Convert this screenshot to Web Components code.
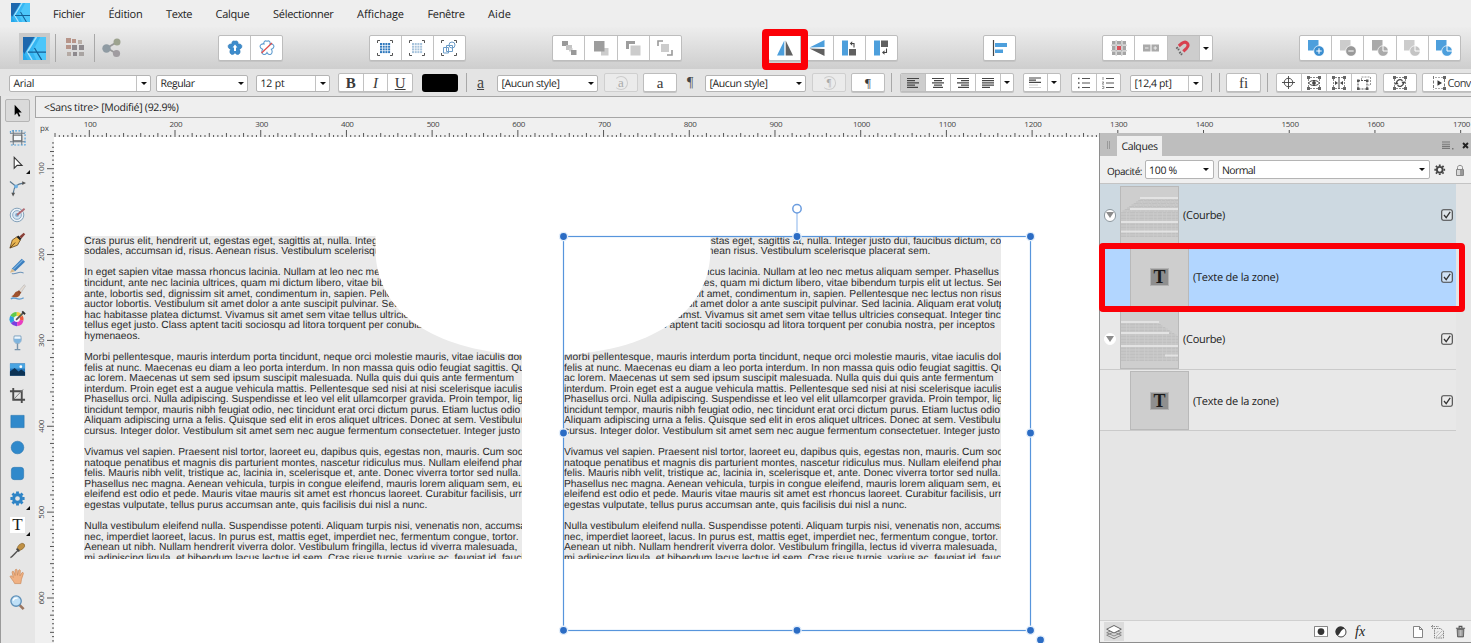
<!DOCTYPE html>
<html lang="fr">
<head>
<meta charset="utf-8">
<title>Sans titre</title>
<style>
  body {
    margin: 0;
    width: 1471px;
    height: 643px;
    overflow: hidden;
    font-family: "Open Sans", "Noto Sans", sans-serif;
    font-size: 10.5px;
    color: #1c1c1c;
    background: #e6e6e6;
  }
</style>
</head>
<body>
<affinity-app></affinity-app>

<script>
// ---------- icons ----------
const LOGO = `<path d="M0 0H24V24H0z" fill="#35b6f2"/><path d="M0 0H12L0 20z" fill="#1d67ad"/><path d="M24 0V24H14L10 15 18 0z" fill="#4cc6fa"/>
  <path d="M14 0L4.500 15.500 9.500 24" fill="none" stroke="#a5e2ff" stroke-width="1.500"/><path d="M5 15.800H24M12 11.500L19.500 24" stroke="#145f96" stroke-width="1.300" fill="none"/><path d="M0 15V24H5z" fill="#27a7ea"/>`;
const BRACKETS = `<path d="M.5 3V.5H3M13 .5H15.500V3M15.500 13V15.500H13M3 15.500H.5V13" fill="none" stroke="#555" stroke-width="1"/>`;
const GRIDDOTS = (c) => {
  let s = '';
  for (let y = 0; y < 4; y++) for (let x = 0; x < 4; x++) s += `<rect x="${3 + x * 2.7}" y="${3 + y * 2.7}" width="2" height="2" fill="${c}"/>`;
  return s;
};
const NODES = `<g fill="#666"><path d="M0 0h3v3H0zM11 0h3v3h-3zM0 11h3v3H0zM11 11h3v3h-3z"/></g><path d="M1.500 3V11M12.500 3V11M3 1.500H11M3 12.500H11" stroke="#888" stroke-width="1" stroke-dasharray="2 1"/>`;
const FLOWER = 'M8 1.200C10 .200 11.600 1.700 11 4 13.500 3.600 15.300 5 14.800 6.900 14.500 8.300 13.400 8.900 12.300 9.300 13.500 11 13.500 13.200 11.800 14.200 10.300 15 8.800 14.300 8 12.600 7.200 14.300 5.700 15 4.200 14.200 2.500 13.200 2.500 11 3.700 9.300 2.600 8.900 1.500 8.300 1.200 6.900.700 5 2.500 3.600 5 4 4.400 1.700 6 .200 8 1.200z';
const PARA = (rows) => rows.map(([a, b], i) => `<path d="M${a} ${1.5 + i * 2.2}H${b}" stroke="#444" stroke-width="1.200"/>`).join('');
const BOOL = (a, b, extra) => `<rect x="0" y="0" width="10.500" height="10.500" fill="${a}"/><circle cx="11" cy="11" r="5.300" fill="${b}" stroke="#fff" stroke-width=".7"/>${extra}`;

const ICONS = {
  logo: ['0 0 24 24', LOGO],
  pixels: ['0 0 20 20', `<g fill="#b7958a"><path d="M1 0h5v5H1zM7 1h4v4H7zM1 7h5v4H1z"/></g><g fill="#9c9c9c"><path d="M7 7h5v5H7zM14 7h5v5h-5zM8 14h4v4H8z" fill="#8e8a8e"/><path d="M13 2h4v4h-4z" fill="#bbb0a8"/><path d="M2 14h4v4H2z" fill="#b5aaa4"/><path d="M14 14h5v4h-5z" fill="#a9a4a2"/></g>`],
  share: ['0 0 20 20', `<path d="M5 10L15 4M5 10L15 16" stroke="#999" stroke-width="1.800"/><circle cx="4.500" cy="10.500" r="4.200" fill="#8f9ba3"/><circle cx="15" cy="4" r="3.500" fill="#9da38f"/><circle cx="14.500" cy="15.500" r="3.600" fill="#a09ca0"/>`],
  flower: ['0 0 16 16', `<path d="${FLOWER}" fill="#3d8ccc" stroke="#2f78b6" stroke-width=".6"/><path d="M8 4.500L10.400 7.500H9V11H7V7.500H5.600z" fill="#fff"/>`],
  flowerOff: ['0 0 16 16', `<path d="${FLOWER}" fill="#fff" stroke="#5f9ccf" stroke-width="1.100"/><path d="M2.500 13L13 3" stroke="#e04a4a" stroke-width="1.200"/>`],
  gridFull: ['0 0 16 16', BRACKETS + GRIDDOTS('#2f78bd')],
  gridSoft: ['0 0 16 16', BRACKETS + GRIDDOTS('#a8c4dc')],
  gridShape: ['0 0 16 16', BRACKETS + `<path d="M2.500 7.500H7.500V13H2.500zM5.500 5.500H11.500V11.500H5.500z" fill="none" stroke="#6b9cc8"/><circle cx="11" cy="5" r="3" fill="none" stroke="#6b9cc8"/>`],
  order1: ['0 0 16 16', `<path d="M1 1h6v5H1z" fill="#999"/><path d="M5 5h6v5H5z" fill="#c4c4c4"/><path d="M8 8h3.500v3.500H8z" fill="#ccc"/><path d="M10 10h5.500v5H10z" fill="#999"/>`],
  order2: ['0 0 16 16', `<path d="M8 8h7.500v7.500H8z" fill="#ccc"/><path d="M1 1h10.500v10.500H1z" fill="#9d9d9d"/>`],
  order3: ['0 0 16 16', `<path d="M1 1h9v3H4v5H1z" fill="#9d9d9d"/><path d="M5.500 5.500h10v10h-10z" fill="#ccc"/>`],
  order4: ['0 0 16 16', `<path d="M4 4h8v8H4z" fill="#ccc"/><path d="M1 6V1H6M10 15H15V10" fill="none" stroke="#999" stroke-width="1.600"/>`],
  flipH: ['0 0 16 16', `<path d="M7.300 .5V15.500H0z" fill="#4d9fdc"/><path d="M8.700 .5V15.500H16z" fill="#606060"/>`],
  flipV: ['0 0 16 16', `<path d="M.5 7.500L15.500 0V7z" fill="#4d9fdc"/><path d="M.5 8.500L15.500 16V9z" fill="#606060"/>`],
  rotL: ['0 0 16 16', `<path d="M1 .5h6v15H1z" fill="#4d9fdc"/><path d="M8 9h7v6.500H8z" fill="#606060"/><path d="M10.500 3.500H13V7.500" fill="none" stroke="#444" stroke-width="1.100"/><path d="M11.200 1.300L8.800 3.500 11.200 5.700z" fill="#444"/>`],
  rotR: ['0 0 16 16', `<path d="M1 .5h6v15H1z" fill="#4d9fdc"/><path d="M8 .5h7v6.500H8z" fill="#606060"/><path d="M11 12.500H13.500V8.500" fill="none" stroke="#444" stroke-width="1.100"/><path d="M11.500 10.300L9 12.500 11.500 14.700z" fill="#444"/>`],
  alignObj: ['0 0 16 16', `<path d="M1.500 0V16" stroke="#444" stroke-width="1.200"/><path d="M3 3h12v4H3z" fill="#4d9fdc"/><path d="M3 9.500h8v3.500H3z" fill="#4d9fdc"/>`],
  snapGrid: ['0 0 16 16', `<g fill="#a5a5a5"><path d="M1 1h3.500v3.500H1zM6 1h4v3.500H6zM11.500 1H15v3.500h-3.500zM1 6h3.500v4H1zM11.500 6H15v4h-3.500zM1 11.500h3.500V15H1zM6 11.500h4V15H6zM11.500 11.500H15V15h-3.500z"/></g><path d="M5.200 0V16M10.700 0V16M0 5.200H16M0 10.700H16" stroke="#888" stroke-width=".5"/><path d="M6 6h4v4H6z" fill="#d9505a"/>`],
  snapPix: ['0 0 16 16', `<path d="M0 4.500h7.500v7H0zM8.500 4.500H16v7H8.500z" fill="#aaa"/><path d="M2 8H5.500M10.500 8H14M12.200 6.200V9.800" stroke="#eee" stroke-width="1"/>`],
  magnet: ['0 0 16 16', `<path d="M3.800 6L7 3.300C11.500 0 15 4.800 11.500 8.300L8.300 11.300" fill="none" stroke="#d8414f" stroke-width="3"/><path d="M1.500 7.300L4 10M4.500 12L7 14.700" stroke="#666" stroke-width="2.200" stroke-dasharray="1.600 .8"/>`],
  boolAdd: ['0 0 16 16', BOOL('#4d9fdc', '#3b8ed0', '<path d="M11 8.300V13.700M8.300 11H13.700" stroke="#fff" stroke-width="1.100"/>')],
  boolSub: ['0 0 16 16', BOOL('#ccc', '#999', '<path d="M8.300 11H13.700" stroke="#fff" stroke-width="1"/>')],
  boolInt: ['0 0 16 16', BOOL('#aaa', '#aaa', '<path d="M11 5.700V11H16" fill="none" stroke="#fff"/>')],
  boolXor: ['0 0 16 16', BOOL('#ccc', '#c4c4c4', '<path d="M11 5.700V11H16" fill="none" stroke="#fff"/>')],
  boolDiv: ['0 0 16 16', BOOL('#4d9fdc', '#4d9fdc', '<path d="M11 5.700V11H16" fill="none" stroke="#fff"/>')],
  left: ['0 0 12 12', PARA([[0, 12], [0, 8], [0, 12], [0, 8], [0, 11]])],
  center: ['0 0 12 12', PARA([[0, 12], [2, 10], [0, 12], [2, 10], [1, 11]])],
  right: ['0 0 12 12', PARA([[0, 12], [4, 12], [0, 12], [4, 12], [1, 12]])],
  justify: ['0 0 12 12', PARA([[0, 12], [0, 12], [0, 12], [0, 12], [0, 8]])],
  vtop: ['0 0 12 12', `<path d="M0 1H12M0 3.200H7M0 5.400H12" stroke="#444" stroke-width="1.200"/><path d="M0 8H9M0 10.500H12" stroke="#ccc" stroke-width="1"/>`],
  bullets: ['0 0 12 12', `<path d="M4 1.500H12M4 6H12M4 10.500H12" stroke="#555" stroke-width="1.100"/><path d="M0 1.500H1.500M0 6H1.500M0 10.500H1.500" stroke="#555" stroke-width="1.500"/>`],
  numbers: ['0 0 12 12', `<path d="M4 1.500H12M4 6H12M4 10.500H12" stroke="#555" stroke-width="1.100"/><path d="M1 0V3M0 5H1.800L.3 7.200H2M0 9.300H1.800V11.600H0" stroke="#777" stroke-width=".8" fill="none"/>`],
  target: ['0 0 14 14', `<circle cx="7" cy="7" r="4.600" fill="none" stroke="#444"/><path d="M7 0V14M0 7H14" stroke="#444"/>`],
  eyeBox: ['0 0 14 14', NODES + `<path d="M1.500 7C4 3.600 10 3.600 12.500 7 10 10.400 4 10.400 1.500 7z" fill="#fff" stroke="#444"/><circle cx="7" cy="7" r="1.900" fill="#444"/>`],
  flipBox: ['0 0 14 14', NODES + `<path d="M7 1V13" stroke="#444"/><path d="M3 5L6 7 3 9zM11 5L8 7 11 9z" fill="#444"/>`],
  copyBox: ['0 0 14 14', `<path d="M4.500 4V1H13.500V9H11" fill="none" stroke="#999" stroke-dasharray="2 1"/><path d="M1 4.500H10V13H1z" fill="none" stroke="#555" stroke-width="1.100" stroke-dasharray="2 1"/><path d="M0 3.500h2.500V6H0zM9 3.500h2.500V6H9zM0 11.500h2.500V14H0zM9 11.500h2.500V14H9z" fill="#555"/>`],
  cycleBox: ['0 0 14 14', NODES + `<path d="M3.500 7A3.500 3.500 0 0 1 9.500 4.700M10.500 7A3.500 3.500 0 0 1 4.500 9.300" fill="none" stroke="#444" stroke-width="1.300"/><path d="M12.700 5.500L10.500 8.500 8.300 5.800zM1.300 8.500L3.500 5.500 5.700 8.200z" fill="#444"/>`],
  convert: ['0 0 14 14', `<path d="M1.500 0V14M12.500 3V11" stroke="#777" stroke-dasharray="3 1.500"/><path d="M3 1.500H11M3 12.500H11" stroke="#aaa" stroke-dasharray="2 1"/><path d="M11 0h3v3h-3zM11 11h3v3h-3z" fill="#666"/><path d="M5.500 4.200L10 7 5.500 9.800z" fill="#333"/>`],
  move: ['0 0 18 18', `<path d="M6 3V14L8.500 11.600 10.400 15.500 12 14.700 10.100 11H13.500z" fill="#000"/>`],
  artboard: ['0 0 18 18', `<path d="M4.500 1V17M13.500 1V17M1 4.500H17M1 13.500H17" stroke="#6f7b86" stroke-width="1.100"/><path d="M4.500 6.500H13.500V12.500H4.500z" fill="#f4f8fb" stroke="#555"/><path d="M1.500 4V1.500M2 17H17V3M3 2H14" fill="none" stroke="#4d9fdc" stroke-width="1.200" stroke-dasharray="2 1.500"/>`],
  node: ['0 0 18 18', `<path d="M5.500 2.500V14L8.600 11H13.800z" fill="#fff" stroke="#333" stroke-width="1.100"/>`],
  corner: ['0 0 18 18', `<path d="M1 1.500L7 6.500C5 9 5 11 4.500 14M7 6.500C10 4 12 3.500 15 3.200" fill="none" stroke="#5a7890" stroke-width="1.300"/><path d="M14 1.200L18 3.200 14 5.200zM2.500 13.500L6.500 13.500 4.300 17.500z" fill="#555"/><circle cx="7.500" cy="6.800" r="2" fill="#6fb1e4"/>`],
  contour: ['0 0 18 18', `<circle cx="8.500" cy="9.500" r="7.200" fill="#e9f0f6" stroke="#7d9cb6"/><circle cx="8.500" cy="9.500" r="4.600" fill="#d7e6f2" stroke="#86a6c2"/><circle cx="8.500" cy="9.500" r="2" fill="#7fa9cc"/><path d="M8.500 9.500L16.500 3" stroke="#b06a72" stroke-width="2"/>`],
  pen: ['0 0 18 18', `<path d="M1 17L3.500 8.500 8.500 5 12 8.500 9 14z" fill="#e9b551" stroke="#6a4a20" stroke-width=".9"/><path d="M1 17L6.500 11.200" stroke="#5a3c14"/><path d="M9 4.500L12.500 8" stroke="#222" stroke-width="2.400"/><path d="M11 4.800L15.500 .8 17.200 2.500 13.200 6.800z" fill="#8a4038"/>`],
  pencil: ['0 0 18 18', `<path d="M3 11.500L13.500 .8 17 4 6.500 14z" fill="#3c7fbf"/><path d="M4.500 12L14.500 2.300" stroke="#7db4e2" stroke-width="1.200"/><path d="M1 15.500L3 11.500 6.500 14z" fill="#d9b98a"/><path d="M3 16.500C8 18 10 13 15.500 16" stroke="#6c93b8" stroke-width="1.100" fill="none"/>`],
  brush: ['0 0 18 18', `<path d="M10 8L16 .8 17.500 2 12.500 9.500z" fill="#e4dcd4" stroke="#aaa" stroke-width=".5"/><path d="M8 8.500L10.500 6.500 13 9 11 12z" fill="#8f4a2c"/><path d="M8.500 8C5.500 8.500 6 12 2.500 13 6 15 11.500 14 11.500 11z" fill="#a0522d"/><path d="M2 16C6 12 9 19 15.500 14.500" fill="none" stroke="#5d9bd0" stroke-width="1.400"/>`],
  picker: ['0 0 18 18', `<path d="M8 9.500L8 2A7.500 7.500 0 0 1 14.500 6z" fill="#f6cf3c"/><path d="M8 9.500L8 2A7.500 7.500 0 0 0 1.500 6z" fill="#5fc94a"/><path d="M8 9.500L1.500 6A7.500 7.500 0 0 0 2 14z" fill="#2b9fe0"/><path d="M8 9.500L2 14A7.500 7.500 0 0 0 9 17z" fill="#7a3fe0"/><path d="M8 9.500L9 17A7.500 7.500 0 0 0 15.300 11z" fill="#e83dc0"/><path d="M8 9.500L15.300 11A7 7 0 0 0 14.500 6z" fill="#ef5a3c"/><circle cx="8.300" cy="9.500" r="3.200" fill="#f4f4f4"/><path d="M7.500 10.500L15 3" stroke="#555" stroke-width="1.800"/><path d="M14 1.500L17 4.500" stroke="#333" stroke-width="2"/>`],
  glass: ['0 0 18 18', `<path d="M5.500 1H12.500C13.500 6 12.500 9 9 9 5.500 9 4.500 6 5.500 1z" fill="#edf6fc" stroke="#7ba0be"/><path d="M5.300 4H12.700C13 7.500 11.500 8.600 9 8.600 6.500 8.600 5 7.500 5.300 4z" fill="#7fb4dd"/><path d="M9 9V15M6 15.500H12" stroke="#7893aa" stroke-width="1.500"/>`],
  image: ['0 0 18 18', `<path d="M1 2.500H17V15.500H1z" fill="#2776b8"/><path d="M1 3H17V8H1z" fill="#4aa5e2"/><path d="M1 11L6 7.500 10 11 13 9 17 12V15.500H1z" fill="#0c3254"/><circle cx="12.500" cy="6" r="1.500" fill="#fff"/>`],
  crop: ['0 0 18 18', `<path d="M4.500 1V13.500H17M1 4.500H13.500V17" fill="none" stroke="#4c4c4c" stroke-width="2"/><path d="M5 13L15 2.500" stroke="#777" stroke-width="1"/>`],
  rect: ['0 0 18 18', `<path d="M2 2.500H16V15.500H2z" fill="#3089cb" stroke="#2573b0" stroke-width=".6"/>`],
  ellipse: ['0 0 18 18', `<circle cx="9" cy="9" r="6.700" fill="#3089cb" stroke="#2573b0" stroke-width=".6"/>`],
  rrect: ['0 0 18 18', `<rect x="2.500" y="2.500" width="13" height="13" rx="3" fill="#3089cb" stroke="#2573b0" stroke-width=".6"/>`],
  cog: ['0 0 18 18', `<circle cx="9" cy="9" r="4.100" fill="none" stroke="#2e84c6" stroke-width="3.200"/><g stroke="#2e84c6" stroke-width="3"><path d="M9 1.500V4M9 14V16.500M1.500 9H4M14 9H16.500M3.700 3.700L5.500 5.500M12.500 12.500L14.300 14.300M3.700 14.300L5.500 12.500M12.500 5.500L14.300 3.700"/></g>`],
  dropper: ['0 0 18 18', `<path d="M1.500 16.500C4 15.500 6 12 10 8.500" fill="none" stroke="#555" stroke-width="1.600"/><ellipse cx="12.800" cy="5" rx="4.300" ry="2.900" transform="rotate(-42 12.800 5)" fill="#c09145" stroke="#80602c" stroke-width=".6"/><path d="M8 7L11 10" stroke="#444" stroke-width="1.800"/>`],
  hand: ['0 0 18 18', `<path d="M6 16.500C5 14 2 11 1.200 9 1.500 7.800 3 8.200 4.500 10L3.200 4.300C3.500 3 4.900 3.200 5.200 4.300L6.500 8 6.500 2.300C6.900 1 8.300 1 8.600 2.300L9 7.700 10.200 2.500C10.800 1.400 12 1.800 12 3L11.600 8.300 13.700 5C14.600 4.300 15.500 5 15.200 6L13.200 12 12.500 16.500z" fill="#f0b183" stroke="#c98555" stroke-width=".7"/>`],
  zoom: ['0 0 18 18', `<path d="M10.500 11L15.500 16" stroke="#9c7660" stroke-width="2.800"/><circle cx="7.500" cy="7.500" r="5.500" fill="#bfe0f7" stroke="#5d8fb8" stroke-width="1.400"/><path d="M4.500 7C5 4.800 7 4 9 4.500" stroke="#fff" stroke-width="1.500" fill="none"/>`],
  gear: ['0 0 12 12', `<circle cx="6" cy="6" r="3" fill="none" stroke="#444" stroke-width="2"/><path d="M6 .4V2M6 10V11.600M.4 6H2M10 6H11.600M2 2L3.200 3.200M8.800 8.800L10 10M2 10L3.200 8.800M8.800 3.200L10 2" stroke="#444" stroke-width="1.900"/>`],
  lock: ['0 0 12 12', `<path d="M3.500 5.500V3.500C3.500 .7 8.500 .7 8.500 3.500V5.500" fill="none" stroke="#888"/><path d="M2.500 5.500H9.500V11.500H2.500z" fill="#d8d8d8" stroke="#888"/><path d="M6 6H9V11H6z" fill="#999"/>`],
  menu: ['0 0 12 12', `<path d="M0 3H8M0 5.200H8M0 7.400H8M0 9.400H8" stroke="#777" stroke-width="1.100"/><path d="M10 9H11.500V10.500H10z" fill="#777"/>`],
  close: ['0 0 8 8', `<path d="M1.200 1.200L6.800 6.800M6.800 1.200L1.200 6.800" stroke="#222" stroke-width="2.200"/>`],
  layers: ['0 0 16 16', `<path d="M8 5.500L15.300 8.700 8 12 .7 8.700zM8 8L15.300 11.200 8 14.800 .7 11.200z" fill="#d8d8d8" stroke="#777" stroke-width=".8"/><path d="M8 1.500L15.300 5.200 8 9 .7 5.200z" fill="#fff" stroke="#555" stroke-width=".9"/>`],
  mask: ['0 0 15 12', `<path d="M.5.500H14.500V11.500H.5z" fill="#fff" stroke="#777"/><circle cx="7.500" cy="6" r="3.600" fill="#333"/>`],
  adjust: ['0 0 12 12', `<circle cx="6" cy="6" r="5" fill="#fff" stroke="#444" stroke-width="1"/><path d="M9.500 2.500A5 5 0 1 0 2.500 9.500C5 9 5 4 9.500 2.500z" fill="#333"/>`],
  page: ['0 0 12 14', `<path d="M1.500 1.500H7.500L10.500 4.500V12.500H1.500zM7.500 1.500V4.500H10.500" fill="#fff" stroke="#777" stroke-width=".9"/>`],
  pageDup: ['0 0 14 14', `<path d="M3.500 3.500H9.500L12.500 6V13H3.500z" fill="#eee" stroke="#777" stroke-width=".9" stroke-dasharray="1.500 .8"/><path d="M0 1.500H8M1.500 0V5" stroke="#888" stroke-dasharray="1.500 1"/><path d="M5 12L11 6M5 8.500L7.500 6M8 12.500L12 9" stroke="#aaa" stroke-width=".8"/>`],
  trash: ['0 0 12 14', `<path d="M1 3.500H11M4.500 3V1.500H7.500V3" fill="none" stroke="#555" stroke-width="1.200"/><path d="M2.300 4.500H9.700L9.200 13H2.800z" fill="#888" stroke="#555" stroke-width=".9"/><path d="M4.500 5.500V12M6 5.500V12M7.500 5.500V12" stroke="#ddd" stroke-width=".7"/>`],
  check: ['0 0 12 12', `<rect x=".7" y=".7" width="10.600" height="10.600" rx="1.800" fill="#eee" fill-opacity=".5" stroke="#444" stroke-width="1.100"/><path d="M3 6L5.200 8.600 9.200 2.800" fill="none" stroke="#333" stroke-width="1.300"/>`],
};

// Small base: every element just fills its shadow root with styles + markup
class BaseElement extends HTMLElement {
  constructor() {
    super();
    this.attachShadow({ mode: 'open' });
  }
  connectedCallback() {
    this.shadowRoot.innerHTML = this.render();
    this.ready();
  }
  ready() {}
}

// <ui-icon name="flipH" size="16">
class UiIcon extends BaseElement {
  render() {
    const [box, body] = ICONS[this.getAttribute('name')];
    const [, , w, h] = box.split(' ').map(Number);
    const size = Number(this.getAttribute('size')) || w;
    return `
      <style>:host { display: block; flex: none; line-height: 0; }</style>
      <svg viewBox="${box}" width="${size}" height="${size * h / w}">${body}</svg>`;
  }
}

// A label that is tracked in or out until it is w pixels wide
class UiLabel extends BaseElement {
  render() {
    return `
      <style>
        :host { display: block; flex: none; white-space: nowrap; line-height: 14px; padding-top: 2px; text-rendering: geometricPrecision; }
        span { display: inline-block; }
      </style>
      <span><slot></slot></span>`;
  }
  ready() {
    const w = Number(this.getAttribute('w'));
    if (!w) return;
    const span = this.shadowRoot.querySelector('span');
    const natural = span.getBoundingClientRect().width;
    span.style.letterSpacing = (w - natural) / this.textContent.length + 'px';
    this.style.width = w + 'px';
  }
}

class MenuBar extends BaseElement {
  render() {
    const items = [['Fichier', 32], ['Édition', 34], ['Texte', 26], ['Calque', 34], ['Sélectionner', 60.500], ['Affichage', 47], ['Fenêtre', 37], ['Aide', 23]];
    return `
      <style>
        :host { display: flex; height: 27px; align-items: center; background: #eeeeee; font-size: 11px; }
        ui-icon { margin: -3px 23px 0 11px; }
        nav { display: flex; gap: 23.500px; padding-top: 1px; }
      </style>
      <ui-icon name="logo" size="19"></ui-icon>
      <nav>${items.map(([t, w]) => `<ui-label w="${w}">${t}</ui-label>`).join('')}</nav>`;
  }
}

// Row of joined buttons
class ToolGroup extends BaseElement {
  render() {
    return `
      <style>
        :host {
          display: flex;
          flex: none;
          box-sizing: border-box;
          height: var(--h, 26px);
          border: 1px solid #bdbdbd;
          border-radius: 2px;
          background: #fff;
          overflow: hidden;
          box-shadow: 0 1px 0 #c4c4c4;
        }
        :host([off]) { background: #ebebeb; border-color: #cfcfcf; color: #aaa; box-shadow: none; }
      </style>
      <slot></slot>`;
  }
}

class ToolCell extends BaseElement {
  render() {
    return `
      <style>
        :host {
          display: flex;
          flex: 1 1 0;
          align-items: center;
          justify-content: center;
          border-left: 1px solid #c2c2c2;
          font: 15px/16px "Liberation Serif", serif;
        }
        :host(:first-child) { border-left: 0; }
        :host([on]) { background: #cdcdcd; }
        :host([drop]) { flex: 0 0 12px; }
        i { border: 3px solid transparent; border-top: 3.500px solid #111; border-bottom: 0; }
      </style>
      ${this.hasAttribute('drop') ? '<i></i>' : '<slot></slot>'}`;
  }
}

class ToolSep extends BaseElement {
  render() {
    return `<style>:host { display: block; flex: none; width: 1px; height: 19px; background: #a8a8a8; }</style>`;
  }
}

// Drop-down field; "split" draws the rule before the arrow
class ComboBox extends BaseElement {
  render() {
    return `
      <style>
        :host {
          display: flex;
          flex: none;
          box-sizing: border-box;
          height: 17px;
          align-items: stretch;
          border: 1px solid #b4b4b4;
          border-radius: 2px;
          background: #fff;
        }
        .text { flex: 1; display: flex; align-items: center; padding-left: 3.500px; }
        .arrow { display: flex; align-items: center; justify-content: center; width: 13px; }
        :host([split]) .arrow { border-left: 1px solid #c2c2c2; }
        i { border: 3px solid transparent; border-top: 3.500px solid #111; border-bottom: 0; }
      </style>
      <div class="text"><slot></slot></div>
      <div class="arrow"><i></i></div>`;
  }
}

class MainToolbar extends BaseElement {
  render() {
    const group = (left, width, icons) => `
      <tool-group style="margin-left:${left}px;width:${width}px">
        ${icons.map((n) => `<tool-cell><ui-icon name="${n}" size="16"></ui-icon></tool-cell>`).join('')}
      </tool-group>`;
    return `
      <style>
        :host {
          display: flex;
          height: 42px;
          align-items: center;
          background: linear-gradient(#ededed, #cecece);
        }
        .persona { display: flex; align-items: center; justify-content: center; width: 31px; height: 31px; margin-left: 19px; background: #c9c9c9; }
        tool-sep { height: 28px; }
      </style>
      <div class="persona"><ui-icon name="logo" size="23"></ui-icon></div>
      <tool-sep style="margin-left:5px"></tool-sep>
      <ui-icon name="pixels" size="20" style="margin-left:9px"></ui-icon>
      <tool-sep style="margin-left:9px"></tool-sep>
      <ui-icon name="share" size="20" style="margin-left:6.500px"></ui-icon>
      ${group(96.5, 65, ['flower', 'flowerOff'])}
      ${group(85.5, 97, ['gridFull', 'gridSoft', 'gridShape'])}
      ${group(86.5, 130, ['order1', 'order2', 'order3', 'order4'])}
      ${group(86, 130, ['flipH', 'flipV', 'rotL', 'rotR'])}
      ${group(85, 33, ['alignObj'])}
      <tool-group style="margin-left:86px;width:111px">
        <tool-cell><ui-icon name="snapGrid" size="16"></ui-icon></tool-cell>
        <tool-cell><ui-icon name="snapPix" size="16"></ui-icon></tool-cell>
        <tool-cell on><ui-icon name="magnet" size="16"></ui-icon></tool-cell>
        <tool-cell drop></tool-cell>
      </tool-group>
      ${group(86, 162, ['boolAdd', 'boolSub', 'boolInt', 'boolXor', 'boolDiv'])}`;
  }
}

class ContextBar extends BaseElement {
  render() {
    const ic = (n, size = 12) => `<ui-icon name="${n}" size="${size}"></ui-icon>`;
    return `
      <style>
        :host { display: flex; height: 27px; align-items: center; background: #e4e4e4; overflow: hidden; --h: 19px; }
        combo-box { margin-top: 1px; }
        .swatch { flex: none; width: 36px; height: 18px; border-radius: 3px; background: #000; margin-left: 9px; }
        .glyph { flex: none; font: 16px/16px "Liberation Serif", serif; color: #444; }
        tool-group:not([off]) { color: #3a3a3a; }
        .ring { border: 1px solid #ccc; border-left-color: transparent; border-radius: 50%; line-height: 12px; }
      </style>
      <combo-box split style="margin-left:9px;width:142px"><ui-label w="20.500">Arial</ui-label></combo-box>
      <combo-box style="margin-left:5px;width:92px"><ui-label w="34">Regular</ui-label></combo-box>
      <combo-box split style="margin-left:8px;width:74px"><ui-label w="24">12 pt</ui-label></combo-box>
      <tool-group style="margin-left:8px;width:75px">
        <tool-cell><b>B</b></tool-cell><tool-cell><em>I</em></tool-cell><tool-cell><u>U</u></tool-cell>
      </tool-group>
      <div class="swatch"></div>
      <tool-sep style="margin-left:8px"></tool-sep>
      <u class="glyph" style="margin-left:10px;width:9px">a</u>
      <combo-box style="margin-left:11px;width:101px"><ui-label w="58">[Aucun style]</ui-label></combo-box>
      <tool-group off style="margin-left:6px;width:34px"><tool-cell><span class="ring" style="font-size:13px;padding:0 3px">a</span></tool-cell></tool-group>
      <tool-group style="margin-left:5px;width:34px"><tool-cell>a</tool-cell></tool-group>
      <span class="glyph" style="margin-left:10px;width:8px;font-size:14px">¶</span>
      <combo-box style="margin-left:10px;width:101px"><ui-label w="58">[Aucun style]</ui-label></combo-box>
      <tool-group off style="margin-left:6px;width:34px"><tool-cell><span class="ring" style="font-size:10px;padding:0 4px">¶</span></tool-cell></tool-group>
      <tool-group style="margin-left:5px;width:34px"><tool-cell><span style="font-size:13px">¶</span></tool-cell></tool-group>
      <tool-sep style="margin-left:6px"></tool-sep>
      <tool-group style="margin-left:8px;width:114px">
        <tool-cell on>${ic('left')}</tool-cell><tool-cell>${ic('center')}</tool-cell><tool-cell>${ic('right')}</tool-cell><tool-cell>${ic('justify')}</tool-cell><tool-cell drop></tool-cell>
      </tool-group>
      <tool-group style="margin-left:8.500px;width:38.500px"><tool-cell>${ic('vtop')}</tool-cell><tool-cell drop></tool-cell></tool-group>
      <tool-group style="margin-left:10px;width:50px"><tool-cell>${ic('bullets')}</tool-cell><tool-cell>${ic('numbers')}</tool-cell></tool-group>
      <combo-box split style="margin-left:9px;width:73px"><ui-label w="37">[12,4 pt]</ui-label></combo-box>
      <tool-sep style="margin-left:8px"></tool-sep>
      <tool-sep style="margin-left:7px"></tool-sep>
      <tool-group style="margin-left:6px;width:35px"><tool-cell>fi</tool-cell></tool-group>
      <tool-sep style="margin-left:5.500px"></tool-sep>
      <tool-group style="margin-left:8px;width:101px"><tool-cell>${ic('target', 13)}</tool-cell><tool-cell>${ic('eyeBox', 14)}</tool-cell><tool-cell>${ic('flipBox', 14)}</tool-cell><tool-cell>${ic('copyBox', 14)}</tool-cell></tool-group>
      <tool-group style="margin-left:6px;width:34px"><tool-cell>${ic('cycleBox', 14)}</tool-cell></tool-group>
      <tool-group style="margin-left:5px;width:80px"><tool-cell style="justify-content:flex-start;padding-left:9px;gap:2px">${ic('convert', 14)}<ui-label w="23" style="font:11px 'Open Sans',sans-serif">Conv</ui-label></tool-cell></tool-group>`;
  }
}

class ToolStrip extends BaseElement {
  render() {
    const tools = ['move', 'artboard', 'node*', 'corner', 'contour', 'pen', 'pencil', 'brush', 'picker', 'glass', 'image', 'crop', 'rect', 'ellipse', 'rrect', 'cog*', 'T*', 'dropper', 'hand', 'zoom'];
    return `
      <style>
        :host {
          display: flex;
          flex: none;
          flex-direction: column;
          align-items: center;
          box-sizing: border-box;
          width: 35px;
          padding: 2.500px 1px 0 0;
          border-left: 1px solid #9a9a9a;
          background: #e6e6e6;
        }
        div { display: flex; align-items: center; justify-content: center; width: 25px; height: 25.840px; position: relative; box-sizing: border-box; }
        .on { background: #dadada; border: 1px solid #b5b5b5; border-radius: 2px; height: 23.500px; margin: 0 0 2.340px; }
        .more::after { content: ""; position: absolute; right: 0; bottom: 2px; border: 2px solid #111; border-top-color: transparent; border-left-color: transparent; }
        span { font: 17px/16px "Liberation Serif", serif; background: #fff; width: 15px; height: 16px; text-align: center; color: #222; }
      </style>
      ${tools.map((t, i) => {
        const name = t.replace('*', '');
        return `<div class="${i ? '' : 'on'}${t !== name ? 'more' : ''}">${name === 'T' ? '<span>T</span>' : `<ui-icon name="${name}" size="17"></ui-icon>`}</div>`;
      }).join('')}`;
  }
}

// Ruler in document pixels. "origin" is where unit 100 falls
class DocRuler extends BaseElement {
  render() {
    const vertical = this.hasAttribute('vertical');
    const len = Number(this.getAttribute('length'));
    const origin = Number(this.getAttribute('origin'));
    const from = Number(this.getAttribute('from'));
    const thick = 19;
    const unit = vertical ? 0.8586 : 0.8571;
    let ticks = '';
    let labels = '';
    for (let u = 50; u <= 1720; u += 5) {
      const p = origin + (u - 100) * unit;
      if (p < from || p > len) continue;
      const size = u % 100 === 0 ? 7 : u % 20 === 0 ? 4 : 2;
      ticks += vertical ? `M${thick - size} ${p}H${thick}` : `M${p} ${thick - size}V${thick}`;
      if (u % 100 === 0) {
        const w = u < 1000 ? 13 : 17.5;
        const at = vertical ? `transform="translate(9 ${p}) rotate(-90)"` : `x="${p + 1}" y="9"`;
        labels += `<text ${at} text-anchor="middle" textLength="${w}">${u}</text>`;
      }
    }
    const size = vertical ? `width="${thick}" height="${len}"` : `width="${len}" height="${thick}"`;
    return `
      <style>
        :host { display: block; flex: none; background: #f0f0f0; line-height: 0; }
        text { font: 8px "Open Sans", sans-serif; fill: #444; }
      </style>
      <svg ${size}><path d="${ticks}" stroke="#555" stroke-width="1"/>${labels}</svg>`;
  }
}

// ---------- document ----------
const TEXT = `Cras purus elit, hendrerit ut, egestas eget, sagittis at, nulla. Integer justo dui, faucibus dictum, convallis
sodales, accumsan id, risus. Aenean risus. Vestibulum scelerisque placerat sem.

In eget sapien vitae massa rhoncus lacinia. Nullam at leo nec metus aliquam semper. Phasellus
tincidunt, ante nec lacinia ultrices, quam mi dictum libero, vitae bibendum turpis elit ut lectus. Sed
ante, lobortis sed, dignissim sit amet, condimentum in, sapien. Pellentesque nec lectus non risus
auctor lobortis. Vestibulum sit amet dolor a ante suscipit pulvinar. Sed lacinia. Aliquam erat volutpat.
hac habitasse platea dictumst. Vivamus sit amet sem vitae tellus ultricies consequat. Integer tincidunt
tellus eget justo. Class aptent taciti sociosqu ad litora torquent per conubia nostra, per inceptos
hymenaeos.

Morbi pellentesque, mauris interdum porta tincidunt, neque orci molestie mauris, vitae iaculis dolor
felis at nunc. Maecenas eu diam a leo porta interdum. In non massa quis odio feugiat sagittis. Quisque
ac lorem. Maecenas ut sem sed ipsum suscipit malesuada. Nulla quis dui quis ante fermentum
interdum. Proin eget est a augue vehicula mattis. Pellentesque sed nisi at nisi scelerisque iaculis.
Phasellus orci. Nulla adipiscing. Suspendisse et leo vel elit ullamcorper gravida. Proin tempor, ligula
tincidunt tempor, mauris nibh feugiat odio, nec tincidunt erat orci dictum purus. Etiam luctus odio
Aliquam adipiscing urna a felis. Quisque sed elit in eros aliquet ultrices. Donec at sem. Vestibulum
cursus. Integer dolor. Vestibulum sit amet sem nec augue fermentum consectetuer. Integer justo

Vivamus vel sapien. Praesent nisl tortor, laoreet eu, dapibus quis, egestas non, mauris. Cum sociis
natoque penatibus et magnis dis parturient montes, nascetur ridiculus mus. Nullam eleifend pharetra
felis. Mauris nibh velit, tristique ac, lacinia in, scelerisque et, ante. Donec viverra tortor sed nulla.
Phasellus nec magna. Aenean vehicula, turpis in congue eleifend, mauris lorem aliquam sem, eu
eleifend est odio et pede. Mauris vitae mauris sit amet est rhoncus laoreet. Curabitur facilisis, urna
egestas vulputate, tellus purus accumsan ante, quis facilisis dui nisl a nunc.

Nulla vestibulum eleifend nulla. Suspendisse potenti. Aliquam turpis nisi, venenatis non, accumsan
nec, imperdiet laoreet, lacus. In purus est, mattis eget, imperdiet nec, fermentum congue, tortor.
Aenean ut nibh. Nullam hendrerit viverra dolor. Vestibulum fringilla, lectus id viverra malesuada,
mi adipiscing ligula, et bibendum lacus lectus id sem. Cras risus turpis, varius ac, feugiat id, faucibus`;

class TextFrame extends BaseElement {
  render() {
    return `
      <style>
        :host {
          display: block;
          box-sizing: border-box;
          width: 437.300px;
          height: 323px;
          padding-top: .8px;
          overflow: hidden;
          background: #eaeaea;
          color: #2b2b2b;
          font: 10.285px/10.560px "Liberation Sans", Arial, sans-serif;
          text-rendering: geometricPrecision;
        }
        div { white-space: pre; }
      </style>
      <div>${TEXT}</div>`;
  }
}

// Artboard content: objects sit freely on the canvas
class DocCanvas extends BaseElement {
  render() {
    const handles = [[509.5, 99.500], [743, 99.500], [976.5, 99.500], [509.5, 296], [976.5, 296], [509.5, 493.300], [743, 493.300], [976.5, 493.300], [986.500, 503]];
    return `
      <style>
        :host { display: block; position: relative; flex: 1; background: #fff; overflow: hidden; }
        text-frame { position: absolute; top: 99px; }
        svg { position: absolute; inset: 0; }
      </style>
      <text-frame style="left:30.300px"></text-frame>
      <text-frame style="left:510px"></text-frame>
      <svg width="1046" height="507">
        <path d="M321.500 90V112C321.500 178 385 218.500 489 218.500S656.500 178 656.500 112V90z" fill="#fff"/>
        <g stroke="#5795dc" fill="none">
          <rect x="509.500" y="99.500" width="467" height="394" stroke-width="1.200"/>
          <path d="M743 76V99" stroke="#9cc0ee" stroke-width="1.200"/>
          <circle cx="743" cy="71.700" r="4.200" fill="#fff" stroke-width="1.500" stroke="#6c9ddf"/>
        </g>
        ${handles.map(([x, y]) => `<circle cx="${x}" cy="${y}" r="4.100" fill="#2b6cc4" stroke="#e4effb" stroke-width="1.400"/>`).join('')}
      </svg>`;
  }
}

// ---------- layers panel ----------
class LayerRow extends BaseElement {
  render() {
    const kind = this.getAttribute('kind');
    const child = kind === 'text';
    // miniature of a text column with one top corner cut away
    const bars = (cutRight) => {
      let s = '';
      for (let y = 12; y < 51; y += 1.5) {
        const cut = Math.max(0, (25 - y) * 1.5);
        s += `<path d="M${cutRight ? 0 : cut} ${y}h${57 - cut}" stroke="#bdbdbd" stroke-width=".8" stroke-dasharray="5 .6 3 .5"/>`;
      }
      [[11, 19, 38], [22, 9, 48], [35, 0, 57], [44.5, cutRight ? 44 : 0, cutRight ? 13 : 57]].forEach(([y, x, w]) => {
        s += `<path d="M${cutRight && y < 30 ? 0 : x} ${y}h${w}" stroke="#e3e3e3" stroke-width="2"/>`;
      });
      return s;
    };
    const thumb = child
      ? '<div class="t">T</div>'
      : `<svg width="57" height="57">${bars(kind === 'curve-right')}</svg>`;
    return `
      <style>
        :host {
          display: flex;
          align-items: center;
          box-sizing: border-box;
          height: 61.850px;
          width: 356px;
          padding-top: 2px;
          border-bottom: 1px solid #cacaca;
          background: #e8e8e8;
          font-size: 11px;
        }
        :host([tint]) { background: #cdd9e1; }
        :host([selected]) { background: #b2d6ff; }
        .arrow { flex: none; width: 20px; display: flex; justify-content: center; visibility: ${child ? 'hidden' : 'visible'}; }
        .arrow span { width: 10.500px; height: 10.500px; border-radius: 50%; background: #fff; display: flex; align-items: center; justify-content: center; border: 1px solid ${kind === 'curve-left' ? '#8c979e' : '#fff'}; }
        .arrow i { border: 4px solid transparent; border-top: 6px solid #8c8c8c; border-bottom: 0; }
        .thumb { flex: none; box-sizing: border-box; width: 59px; height: 59px; border: 1px solid #b9b9b9; background: #cecece; display: flex; align-items: center; justify-content: center; margin-left: ${child ? 10 : 0}px; }
        .t { width: 17px; height: 16px; background: #8f8f8f; outline: 1px solid #b2b2b2; font: bold 18px/17px "Liberation Serif", serif; text-align: center; color: #1a1a1a; }
        .name { flex: 1; padding-left: 4px; }
        ui-icon { margin-right: 3px; }
      </style>
      <div class="arrow"><span><i></i></span></div>
      <div class="thumb">${thumb}</div>
      <div class="name"><slot></slot></div>
      <ui-icon name="check" size="12"></ui-icon>`;
  }
}

class LayersPanel extends BaseElement {
  render() {
    return `
      <style>
        :host {
          display: flex;
          flex-direction: column;
          box-sizing: border-box;
          width: 372px;
          height: 510px;
          border-left: 1px solid #8e8e8e;
          border-bottom: 1px solid #8e8e8e;
          background: #e5e5e5;
        }
        header { display: flex; align-items: flex-end; height: 23px; flex: none; background: #bebebe; }
        .grip { width: 3px; height: 8px; margin: 0 7px 7px 6.500px; border: solid #999; border-width: 0 1px; box-sizing: border-box; }
        .tab { display: flex; align-items: center; height: 20px; width: 45.500px; box-sizing: border-box; padding-left: 5px; background: #efefef; }
        .spacer { flex: 1; }
        .opts { display: flex; flex: none; align-items: center; height: 28px; box-sizing: border-box; background: #efefef; border-bottom: 1px solid #c4c4c4; }
        .opts combo-box { height: 19px; }
        .rows { flex: 1; }
        footer { display: flex; flex: none; align-items: center; height: 22px; background: #efefef; box-sizing: border-box; border-top: 1px solid #d0d0d0; }
        .stack { display: flex; align-items: center; justify-content: center; width: 20px; height: 19px; background: #dcdcdc; margin-left: 4px; }
        .fx { font: italic 14px/14px "Liberation Serif", serif; color: #222; width: 14px; }
      </style>
      <header>
        <div class="grip"></div>
        <div class="tab"><ui-label w="36">Calques</ui-label></div>
        <div class="spacer"></div>
        <ui-icon name="menu" size="12" style="margin:0 8.500px 5px 0"></ui-icon>
        <ui-icon name="close" size="7" style="margin:0 2px 7px 0"></ui-icon>
      </header>
      <div class="opts">
        <ui-label w="35" style="margin-left:7px;font-size:10px">Opacité:</ui-label>
        <combo-box style="margin-left:2.500px;width:69px"><ui-label w="28">100 %</ui-label></combo-box>
        <combo-box style="margin-left:4px;width:212px"><ui-label w="33">Normal</ui-label></combo-box>
        <ui-icon name="gear" size="11.500" style="margin-left:4.500px"></ui-icon>
        <ui-icon name="lock" size="12" style="margin-left:8.500px"></ui-icon>
      </div>
      <div class="rows">
        <layer-row tint kind="curve-left"><ui-label w="42">(Courbe)</ui-label></layer-row>
        <layer-row selected kind="text"><ui-label w="85.500">(Texte de la zone)</ui-label></layer-row>
        <layer-row kind="curve-right"><ui-label w="42">(Courbe)</ui-label></layer-row>
        <layer-row kind="text"><ui-label w="85.500">(Texte de la zone)</ui-label></layer-row>
      </div>
      <footer>
        <div class="stack"><ui-icon name="layers" size="16"></ui-icon></div>
        <div class="spacer"></div>
        <ui-icon name="mask" size="14"></ui-icon>
        <ui-icon name="adjust" size="12" style="margin-left:7px"></ui-icon>
        <span class="fx" style="margin-left:8px">fx</span>
        <ui-icon name="page" size="12" style="margin-left:43px"></ui-icon>
        <ui-icon name="pageDup" size="14" style="margin-left:7px"></ui-icon>
        <ui-icon name="trash" size="11" style="margin:0 5px 0 10px"></ui-icon>
      </footer>`;
  }
}

// Red call-out frame laid over the interface
class CallOut extends BaseElement {
  render() {
    return `<style>:host { display: block; position: absolute; box-sizing: border-box; border: 6px solid #fb0007; border-radius: 4px; }</style>`;
  }
}

class AffinityApp extends BaseElement {
  render() {
    return `
      <style>
        :host { display: flex; flex-direction: column; height: 643px; position: relative; }
        .work { display: flex; flex: 1; min-height: 0; }
        .doc { display: flex; flex-direction: column; flex: 1; min-width: 0; }
        .title { display: flex; align-items: center; flex: none; box-sizing: border-box; height: 22px; padding-left: 8px; background: #efefef; border: solid #a6a6a6; border-width: 1px 0 1px 1px; }
        .body { display: flex; flex: 1; min-height: 0; }
        .unit { position: absolute; left: 40px; top: 120px; font-size: 8px; color: #444; }
        layers-panel { position: absolute; left: 1099px; top: 133px; }
      </style>
      <menu-bar></menu-bar>
      <main-toolbar></main-toolbar>
      <context-bar></context-bar>
      <div class="work">
        <tool-strip></tool-strip>
        <div class="doc">
          <div class="title"><ui-label w="134.500">&lt;Sans titre&gt; [Modifié] (92.9%)</ui-label></div>
          <doc-ruler length="1436" origin="54.300" from="20"></doc-ruler>
          <div class="body">
            <doc-ruler vertical length="506" origin="31.700" from="2"></doc-ruler>
            <doc-canvas></doc-canvas>
          </div>
        </div>
      </div>
      <ui-label class="unit" w="9">px</ui-label>
      <layers-panel></layers-panel>
      <call-out style="left:762px;top:29px;width:46px;height:41px;border-width:7px"></call-out>
      <call-out style="left:1099px;top:243px;width:366px;height:69px"></call-out>`;
  }
}

customElements.define('ui-icon', UiIcon);
customElements.define('ui-label', UiLabel);
customElements.define('menu-bar', MenuBar);
customElements.define('tool-group', ToolGroup);
customElements.define('tool-cell', ToolCell);
customElements.define('tool-sep', ToolSep);
customElements.define('combo-box', ComboBox);
customElements.define('main-toolbar', MainToolbar);
customElements.define('context-bar', ContextBar);
customElements.define('tool-strip', ToolStrip);
customElements.define('doc-ruler', DocRuler);
customElements.define('text-frame', TextFrame);
customElements.define('doc-canvas', DocCanvas);
customElements.define('layer-row', LayerRow);
customElements.define('layers-panel', LayersPanel);
customElements.define('call-out', CallOut);
customElements.define('affinity-app', AffinityApp);
</script>
</body>
</html>
